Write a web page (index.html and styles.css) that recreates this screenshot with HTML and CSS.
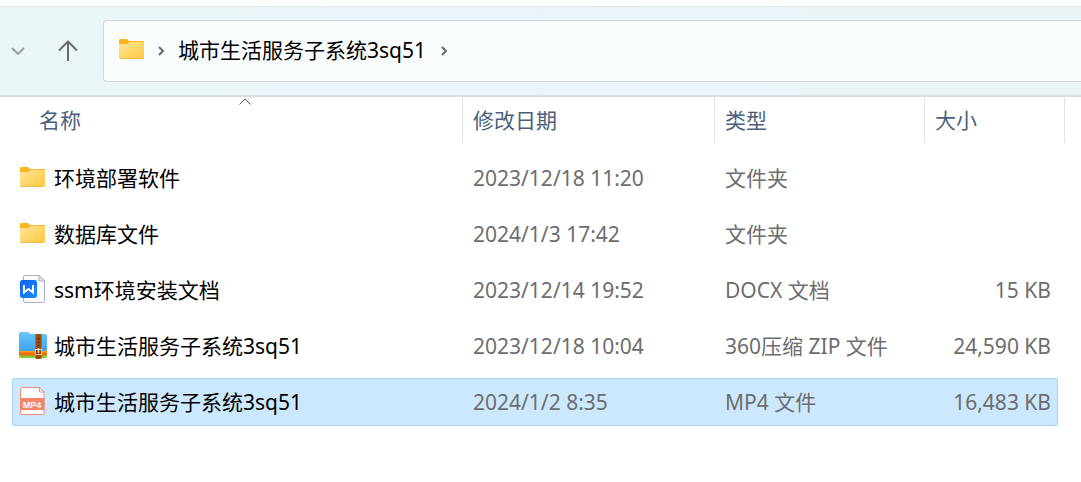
FILE: index.html
```html
<!DOCTYPE html>
<html lang="zh-CN">
<head>
<meta charset="utf-8">
<meta name="viewport" content="width=device-width, initial-scale=1">
<title>城市生活服务子系统3sq51</title>
<link rel="stylesheet" href="styles.css">
</head>
<body>
<svg class="defs" aria-hidden="true">
  <defs>
    <linearGradient id="folderFill" x1="0" y1="0" x2="1" y2="1">
      <stop offset="0" stop-color="#ffe69c"/><stop offset="1" stop-color="#fdc83c"/>
    </linearGradient>
    <linearGradient id="wordFill" x1="0" y1="0" x2="1" y2="1">
      <stop offset="0" stop-color="#0a62f0"/><stop offset="1" stop-color="#1d8bff"/>
    </linearGradient>
    <linearGradient id="zipFill" x1="0" y1="0" x2="0" y2="1">
      <stop offset="0" stop-color="#66c8fa"/><stop offset="1" stop-color="#3fa2ee"/>
    </linearGradient>
    <symbol id="folder" viewBox="0 0 28 28">
      <path d="M1 5.500Q1 4 2.500 4H9l2 2h13.500Q26 6 26 7.500V12H1Z" fill="#f9b51e"/>
      <path d="M1 9H9.500l2-2H24.500Q26 7 26 8.500V22.500Q26 24 24.500 24H2.500Q1 24 1 22.500Z" fill="url(#folderFill)"/>
      <path d="M2 23.500H25" stroke="#eeb944"/>
    </symbol>
  </defs>
</svg>
<header class="toolbar">
  <button class="nav-button recent" type="button" aria-label="最近浏览的位置">
    <svg width="14" height="8" viewBox="0 0 14 8"><path d="M1 1l6 6 6-6" fill="none" stroke="#9a9fa1" stroke-width="2"/></svg>
  </button>
  <button class="nav-button up" type="button" aria-label="上移">
    <svg width="20" height="22" viewBox="0 0 20 22"><path d="M10 21V2M1 10.500l9-9 9 9" fill="none" stroke="#666a6c" stroke-width="2" stroke-linejoin="round"/></svg>
  </button>
  <nav class="address" aria-label="地址">
    <svg class="file-icon" viewBox="0 0 28 28"><use href="#folder"/></svg>
    <svg class="chevron" viewBox="0 0 8 12"><path d="M2 2l4 4-4 4" fill="none" stroke="#65696b" stroke-width="2"/></svg>
    <a class="crumb" href="#">城市生活服务子系统3sq51</a>
    <svg class="chevron" viewBox="0 0 8 12"><path d="M2 2l4 4-4 4" fill="none" stroke="#65696b" stroke-width="2"/></svg>
  </nav>
</header>
<main>
  <table class="files">
    <thead>
      <tr>
        <th class="name-head" scope="col" aria-sort="ascending">名称
          <svg class="sort" viewBox="0 0 12 7"><path d="M.5 6.500L6 1l5.500 5.500" fill="none" stroke="#555"/></svg>
        </th>
        <th scope="col">修改日期</th>
        <th scope="col">类型</th>
        <th scope="col">大小</th>
      </tr>
    </thead>
    <tbody>
      <tr>
        <td class="name"><svg class="file-icon" viewBox="0 0 28 28"><use href="#folder"/></svg><span>环境部署软件</span></td>
        <td>2023/12/18 11:20</td><td>文件夹</td><td class="size"></td>
      </tr>
      <tr>
        <td class="name"><svg class="file-icon" viewBox="0 0 28 28"><use href="#folder"/></svg><span>数据库文件</span></td>
        <td>2024/1/3 17:42</td><td>文件夹</td><td class="size"></td>
      </tr>
      <tr>
        <td class="name">
          <svg class="file-icon" viewBox="0 0 28 28">
            <path d="M5.500.5H20l5.500 5.500V26Q25.500 27.500 24 27.500H6Q4.500 27.500 4.500 26V2Q4.500.5 5.500.5Z" fill="#fafbfd" stroke="#a9b2c0"/>
            <path d="M20 .5V6h5.500Z" fill="#e1e5eb" stroke="#a9b2c0"/>
            <rect x="1" y="5" width="17" height="18" rx="2.500" fill="url(#wordFill)"/>
            <path d="M5 10v7.500l4.500-3.500 4.500 3.500V10" fill="none" stroke="#fff" stroke-width="2"/>
          </svg><span>ssm环境安装文档</span></td>
        <td>2023/12/14 19:52</td><td>DOCX 文档</td><td class="size">15 KB</td>
      </tr>
      <tr>
        <td class="name">
          <svg class="file-icon" viewBox="0 0 28 28">
            <path d="M0 20h28v5q0 2-2 2H2q-2 0-2-2Z" fill="#83c92f"/>
            <path d="M0 18h28v4.500q0 2-2 2H2q-2 0-2-2Z" fill="#f06b0b"/>
            <path d="M0 18h28v2q0 1.500-2 1.500H2q-2 0-2-1.500Z" fill="#ff9c27"/>
            <path d="M0 3Q0 1 2 1h6.500q1.500 0 2.500 1.500L11.500 3H26q2 0 2 2v13q0 2-2 2H2q-2 0-2-2Z" fill="url(#zipFill)"/>
            <rect x="16.500" y="3" width="6" height="25" rx="1" fill="#9b4a12"/>
            <path d="M16.500 4v23M22.500 4v23" stroke="#c26a22"/>
            <path d="M19.500 7v9" stroke="#5d2a0b" stroke-width="1.500" stroke-dasharray="1.500 2"/>
            <rect x="16.500" y="18.500" width="6" height="5" fill="#843807" stroke="#ffd590"/>
            <path d="M19.500 17v5" stroke="#ffe3ae" stroke-width="1.500"/>
          </svg><span>城市生活服务子系统3sq51</span></td>
        <td>2023/12/18 10:04</td><td>360压缩 ZIP 文件</td><td class="size">24,590 KB</td>
      </tr>
      <tr class="selected" aria-selected="true">
        <td class="name">
          <svg class="file-icon" viewBox="0 0 28 28">
            <path d="M2.500.5H20l5 5V26Q25 27.500 23.500 27.500H3Q1.500 27.500 1.500 26V1.500Q1.500.5 2.500.5Z" fill="#fff" stroke="#f08a74"/>
            <path d="M20.500 .5V5H25Z" fill="#fff" stroke="#f08a74"/>
            <rect x="1" y="11" width="24.500" height="12" fill="#f28468"/>
            <text class="badge" x="13" y="20.500" text-anchor="middle" fill="#fff">MP4</text>
          </svg><span>城市生活服务子系统3sq51</span></td>
        <td>2024/1/2 8:35</td><td>MP4 文件</td><td class="size">16,483 KB</td>
      </tr>
    </tbody>
  </table>
</main>
</body>
</html>
```

FILE: styles.css
```css
* { box-sizing: border-box; }

body {
  margin: 0;
  padding-top: 6px;
  background: #fff;
  color: #000;
  font-family: "Noto Sans", "Noto Sans CJK SC", sans-serif;
  font-size: 21px;
  line-height: 30px;
}

.defs { position: absolute; width: 0; height: 0; }
svg { display: block; flex: none; }

.toolbar {
  display: flex;
  align-items: center;
  padding: 13px 0;
  border-top: 1px solid #e3e7e8;
  border-bottom: 2px solid #d7dfe2;
  background: linear-gradient(90deg, #eaf5f7 20%, #ebf3fb 36%, #ebf3fa 50%, #eaf4f7 75%);
}

.nav-button {
  display: flex;
  align-items: center;
  justify-content: center;
  height: 40px;
  padding: 0;
  border: 0;
  background: none;
}
.recent { width: 35px; }
.up { width: 66px; }

.address {
  display: flex;
  flex: 1;
  align-items: center;
  height: 62px;
  margin-left: 2px;
  padding: 0 14px;
  border: 1px solid #d2d8da;
  border-right: 0;
  border-radius: 4px 0 0 4px;
  background: #f9fcfd;
}
.crumb {
  margin: 0 14px 2px 13px;
  color: #000;
  text-decoration: none;
  white-space: nowrap;
}
.chevron { width: 8px; height: 12px; }
.address .file-icon { margin: 0 11px 4px 0; }

.file-icon { width: 28px; height: 28px; }

.files { display: block; margin: 0 16px 0 12px; }
.files thead, .files tbody { display: block; }
.files tr {
  display: grid;
  grid-template-columns: minmax(0, 1fr) 252px 210px 133px;
}
.files thead tr { grid-template-columns: minmax(0, 1fr) 252px 210px 140px; }

.files th {
  height: 46px;
  padding: 8px 10px;
  border-right: 1px solid #e3e3e3;
  color: #4b5f7d;
  font-weight: 400;
  text-align: left;
}
.files .name-head { position: relative; padding-left: 27px; }
.sort {
  position: absolute;
  top: 1px;
  left: calc(50% + 2px);
  width: 12px;
  height: 7px;
}

.files tbody {
  display: grid;
  gap: 8px;
  margin: 11px 7px 0 0;
}
.files td {
  padding: 8px 10px;
  border: 1px solid transparent;
  border-width: 1px 0;
  color: #6d6d6d;
  white-space: nowrap;
}
.files .name {
  display: flex;
  gap: 7px;
  padding-left: 7px;
  color: #000;
}
.files .size { padding-right: 7px; text-align: right; }

.files .selected {
  border-radius: 3px;
  background: #cce8ff;
  box-shadow: inset 0 0 0 1px #a6d5fa;
}

.badge { font: 700 9px "Liberation Sans", sans-serif; }
```
